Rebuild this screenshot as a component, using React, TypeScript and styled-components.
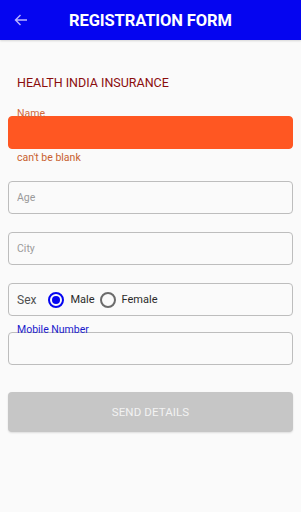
import React, { useState } from "react";
import styled, { createGlobalStyle } from "styled-components";

const Global = createGlobalStyle`
  html, body { margin: 0; padding: 0; background: #fafafa; }
  body { font-family: Roboto, "Noto Sans", Arial, sans-serif; }
  * { box-sizing: border-box; }
`;

const Page = styled.div`
  width: 301px;
  min-height: 512px;
  background: #fafafa;
  display: flex;
  flex-direction: column;
`;

const Header = styled.header`
  height: 40px;
  background: #0505f0;
  display: flex;
  align-items: center;
  padding-left: 12px;
  box-shadow: 0 1px 2px rgba(0,0,0,0.15);
`;

const BackButton = styled.button`
  border: 0;
  background: transparent;
  padding: 0;
  width: 18px;
  height: 18px;
  display: flex;
  align-items: center;
  justify-content: center;
  color: #b9b4ff;
`;

const Title = styled.h1`
  margin: 0 0 0 39px;
  font-size: 16.5px;
  font-weight: 700;
  color: #ffffff;
  letter-spacing: -0.1px;
`;

const Form = styled.form`
  display: flex;
  flex-direction: column;
  padding: 0 8px;
`;

const Company = styled.div`
  margin-top: 35px;
  padding-left: 9px;
  font-size: 12.5px;
  color: #8b0d0d;
  line-height: 15px;
`;

const FieldGroup = styled.div<{ $mt: number }>`
  margin-top: ${(p) => p.$mt}px;
  display: flex;
  flex-direction: column;
`;

const Label = styled.label<{ $color: string }>`
  padding-left: 9px;
  font-size: 10.5px;
  line-height: 12px;
  color: ${(p) => p.$color};
  margin-bottom: -4px;
  position: relative;
  z-index: 1;
`;

const Input = styled.input<{ $error?: boolean }>`
  width: 100%;
  height: 33px;
  border-radius: 4px;
  border: 1px solid ${(p) => (p.$error ? "#ff5722" : "#bdbdbd")};
  background: ${(p) => (p.$error ? "#ff5722" : "#fafafa")};
  padding: 0 8px;
  font-family: inherit;
  font-size: 10.5px;
  color: #333;
  outline: none;
  &::placeholder { color: #9a9a9a; }
`;

const ErrorText = styled.div`
  padding-left: 9px;
  margin-top: 2px;
  font-size: 10.5px;
  line-height: 14px;
  color: #c8602f;
`;

const SexBox = styled.div`
  margin-top: 18px;
  height: 33px;
  border: 1px solid #bdbdbd;
  border-radius: 4px;
  display: flex;
  align-items: center;
  padding-left: 8px;
`;

const SexLabel = styled.span`
  font-size: 12px;
  color: #505050;
  margin-right: 12px;
`;

const RadioOption = styled.label`
  display: flex;
  align-items: center;
  gap: 6px;
  font-size: 11px;
  color: #2a2a2a;
  margin-right: 5px;
  cursor: pointer;
`;

const RadioCircle = styled.span<{ $checked: boolean }>`
  width: 16px;
  height: 16px;
  border-radius: 50%;
  border: 2px solid ${(p) => (p.$checked ? "#0505f0" : "#6b6b6b")};
  display: flex;
  align-items: center;
  justify-content: center;
  &::after {
    content: "";
    width: 8px;
    height: 8px;
    border-radius: 50%;
    background: ${(p) => (p.$checked ? "#0505f0" : "transparent")};
  }
`;

const SendButton = styled.button`
  margin-top: 27px;
  height: 40px;
  width: 100%;
  border: 0;
  border-radius: 4px;
  background: #c6c6c6;
  color: #f2f2f2;
  font-family: inherit;
  font-size: 11.5px;
  letter-spacing: 0.1px;
  box-shadow: 0 1px 2px rgba(0,0,0,0.12);
`;

export default function App() {
  const [sex, setSex] = useState("male");
  return (
    <Page>
      <Global />
      <Header>
        <BackButton aria-label="back">
          <svg width="14" height="12" viewBox="0 0 14 12" fill="none" stroke="currentColor" strokeWidth="1.4">
            <path d="M13 6H1.5M6.5 1L1.5 6l5 5" />
          </svg>
        </BackButton>
        <Title>REGISTRATION FORM</Title>
      </Header>
      <Form onSubmit={(e) => e.preventDefault()}>
        <Company>HEALTH INDIA INSURANCE</Company>
        <FieldGroup $mt={18}>
          <Label $color="#d2693a">Name</Label>
          <Input $error />
          <ErrorText>can't be blank</ErrorText>
        </FieldGroup>
        <FieldGroup $mt={16}>
          <Input placeholder="Age" />
        </FieldGroup>
        <FieldGroup $mt={18}>
          <Input placeholder="City" />
        </FieldGroup>
        <SexBox>
          <SexLabel>Sex</SexLabel>
          <RadioOption onClick={() => setSex("male")}>
            <RadioCircle $checked={sex === "male"} />
            Male
          </RadioOption>
          <RadioOption onClick={() => setSex("female")}>
            <RadioCircle $checked={sex === "female"} />
            Female
          </RadioOption>
        </SexBox>
        <FieldGroup $mt={8}>
          <Label $color="#1a1acc">Mobile Number</Label>
          <Input />
        </FieldGroup>
        <SendButton type="submit">SEND DETAILS</SendButton>
      </Form>
    </Page>
  );
}
